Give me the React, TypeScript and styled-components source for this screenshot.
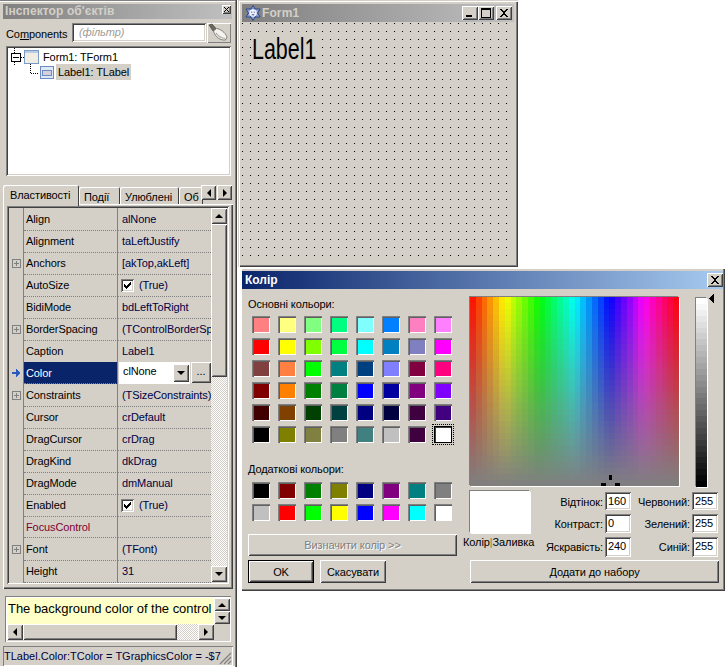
import styled, { createGlobalStyle, css } from "styled-components";

const GlobalStyle = createGlobalStyle`
    html, body {
        margin: 0;
        padding: 0;
        background: #fff;
        overflow: hidden;
    }

    body {
        font-family: "Liberation Sans", Arial, sans-serif;
        font-size: 11px;
        letter-spacing: -0.1px;
        color: #000;
    }
`;

const raised = css`
    background: #d4d0c8;
    box-shadow:
        inset 1px 1px 0 #fff,
        inset -1px -1px 0 #404040,
        inset 2px 2px 0 #d4d0c8,
        inset -2px -2px 0 #808080;
`;

const sunken = css`
    box-shadow:
        inset 1px 1px 0 #808080,
        inset -1px -1px 0 #fff,
        inset 2px 2px 0 #404040,
        inset -2px -2px 0 #d4d0c8;
`;

const hatch = css`
    background-color: #fff;
    background-image: conic-gradient(#d4d0c8 25%, transparent 0 50%, #d4d0c8 0 75%, transparent 0);
    background-size: 2px 2px;
`;

const Page = styled.div`
    position: relative;
    width: 728px;
    height: 668px;
    overflow: hidden;
`;

/* ---------- inspector ---------- */

const Inspector = styled.section`
    position: absolute;
    left: 0;
    top: 0;
    width: 237px;
    height: 667px;
    background: #d4d0c8;
    box-shadow: inset -1px 0 0 #404040, inset -2px 0 0 #808080, inset 0 1px 0 #808080, inset 0 2px 0 #fff,
        inset 0 -1px 0 #fff;
`;

const InspectorTitle = styled.h1`
    position: absolute;
    left: 3px;
    top: 4px;
    width: 229px;
    height: 15px;
    margin: 0;
    padding-left: 2px;
    box-sizing: border-box;
    background: linear-gradient(90deg, #808080, #c0c0c0);
    color: #d4d0c8;
    font-size: 12px;
    font-weight: bold;
    letter-spacing: 0.1px;
    line-height: 15px;
`;

const SmallClose = styled.button`
    ${raised}
    position: absolute;
    left: 222px;
    top: 5px;
    width: 9px;
    height: 9px;
    padding: 0;
    border: 0;
    font-size: 0;
`;

const ComponentsLabel = styled.label`
    position: absolute;
    left: 6px;
    top: 27px;
    line-height: 14px;
    u {
        text-decoration: underline;
    }
`;

const FilterEdit = styled.div`
    ${sunken}
    position: absolute;
    left: 72px;
    top: 23px;
    width: 134px;
    height: 19px;
    box-sizing: border-box;
    padding-left: 7px;
    background: #fff;
    color: #a09c94;
    font-style: italic;
    line-height: 19px;
`;

const BrushButton = styled.button`
    position: absolute;
    left: 207px;
    top: 23px;
    width: 24px;
    height: 20px;
    padding: 0;
    border: 0;
    background: #d4d0c8;
    box-shadow: inset 1px 1px 0 #fff, inset -1px -1px 0 #808080;
    svg {
        display: block;
    }
`;

const Tree = styled.div`
    ${sunken}
    position: absolute;
    left: 6px;
    top: 46px;
    width: 225px;
    height: 130px;
    background: #fff;
`;

const TreeSvg = styled.svg`
    position: absolute;
    left: 0;
    top: 0;
`;

const TreeText = styled.span<{ $left: number; $top: number; $selected?: boolean }>`
    position: absolute;
    left: ${(p) => p.$left}px;
    top: ${(p) => p.$top}px;
    height: 16px;
    padding: 0 2px;
    line-height: 16px;
    white-space: nowrap;
    background: ${(p) => (p.$selected ? "#d4d0c8" : "transparent")};
`;

const TabStrip = styled.div`
    position: absolute;
    left: 3px;
    top: 185px;
    width: 230px;
    height: 20px;
`;

const Tab = styled.div<{ $left: number; $width: number; $active?: boolean }>`
    position: absolute;
    left: ${(p) => p.$left}px;
    top: ${(p) => (p.$active ? 0 : 2)}px;
    width: ${(p) => p.$width}px;
    height: ${(p) => (p.$active ? 21 : 18)}px;
    overflow: hidden;
    box-sizing: border-box;
    padding: ${(p) => (p.$active ? "3px 0 0 7px" : "3px 0 0 5px")};
    border-radius: 2px 2px 0 0;
    background: #d4d0c8;
    z-index: ${(p) => (p.$active ? 2 : 0)};
    box-shadow: inset 1px 1px 0 #fff, inset -1px 0 0 #404040;
    white-space: nowrap;
    line-height: 14px;
`;

const TabScroll = styled.button<{ $left: number }>`
    ${raised}
    position: absolute;
    left: ${(p) => p.$left}px;
    top: 0;
    width: 15px;
    height: 15px;
    padding: 0;
    border: 0;
    display: flex;
    align-items: center;
    justify-content: center;
    z-index: 3;
`;

const Arrow = styled.i<{ $dir: "up" | "down" | "left" | "right" }>`
    display: block;
    width: 0;
    height: 0;
    border-style: solid;
    border-color: transparent;
    ${(p) =>
        p.$dir === "up" &&
        css`
            border-width: 0 4px 4px;
            border-bottom-color: #000;
        `}
    ${(p) =>
        p.$dir === "down" &&
        css`
            border-width: 4px 4px 0;
            border-top-color: #000;
        `}
    ${(p) =>
        p.$dir === "left" &&
        css`
            border-width: 4px 4px 4px 0;
            border-right-color: #000;
        `}
    ${(p) =>
        p.$dir === "right" &&
        css`
            border-width: 4px 0 4px 4px;
            border-left-color: #000;
        `}
`;

const TabPage = styled.div`
    position: absolute;
    left: 3px;
    top: 204px;
    width: 230px;
    height: 385px;
    box-shadow: inset 1px 1px 0 #fff, inset -1px -1px 0 #404040, inset -2px -2px 0 #808080;
`;

const Grid = styled.div`
    ${sunken}
    position: absolute;
    left: 4px;
    top: 2px;
    width: 222px;
    height: 378px;
`;

const Rows = styled.div`
    position: absolute;
    left: 2px;
    top: 2px;
    width: 202px;
`;

const Row = styled.div`
    display: grid;
    grid-template-columns: 15px 94px 93px;
    height: 22px;
`;

const Gutter = styled.div`
    position: relative;
    border-right: 1px solid #808080;
    display: flex;
    align-items: center;
    justify-content: center;
`;

const PlusBox = styled.span`
    display: block;
    box-sizing: border-box;
    width: 9px;
    height: 9px;
    margin-left: 1px;
    border: 1px solid #808080;
    background:
        linear-gradient(#808080, #808080) center / 5px 1px no-repeat,
        linear-gradient(#808080, #808080) center / 1px 5px no-repeat;
`;

const RowArrow = styled.svg`
    display: block;
    margin-left: 1px;
`;

const NameCell = styled.div<{ $active?: boolean; $link?: boolean }>`
    box-sizing: border-box;
    padding-left: 2px;
    border-right: 1px solid #808080;
    border-bottom: 1px dotted #808080;
    line-height: 22px;
    white-space: nowrap;
    overflow: hidden;
    color: ${(p) => (p.$active ? "#fff" : p.$link ? "#800030" : "#000")};
    background: ${(p) => (p.$active ? "#0a246a" : "transparent")};
`;

const ValueCell = styled.div`
    position: relative;
    box-sizing: border-box;
    padding-left: 4px;
    border-bottom: 1px dotted #808080;
    line-height: 22px;
    white-space: nowrap;
    color: #000040;
    display: flex;
    align-items: center;
`;

const ActiveValue = styled.div`
    position: relative;
    height: 22px;
    background: #d4d0c8;
`;

const ColorCombo = styled.div`
    position: absolute;
    left: 1px;
    top: 0;
    width: 71px;
    height: 22px;
    box-sizing: border-box;
    padding-left: 4px;
    background: #fff;
    line-height: 19px;
`;

const ComboDrop = styled.button`
    ${raised}
    position: absolute;
    right: 1px;
    top: 2px;
    width: 16px;
    height: 18px;
    padding: 0;
    border: 0;
    display: flex;
    align-items: center;
    justify-content: center;
`;

const EllipsisButton = styled.button`
    ${raised}
    position: absolute;
    left: 73px;
    top: 0;
    width: 20px;
    height: 21px;
    padding: 0 0 4px;
    border: 0;
    font: inherit;
    line-height: 14px;
    letter-spacing: 0;
`;

const Check = styled.span`
    ${sunken}
    display: block;
    flex: none;
    width: 13px;
    height: 13px;
    margin: 0 5px 0 -1px;
    background: #fff;
    svg {
        display: block;
    }
`;

const ScrollButton = styled.button<{ $top?: number; $left?: number; $w?: number; $h?: number }>`
    ${raised}
    position: absolute;
    left: ${(p) => p.$left ?? 0}px;
    top: ${(p) => p.$top ?? 0}px;
    width: ${(p) => p.$w ?? 16}px;
    height: ${(p) => p.$h ?? 16}px;
    padding: 0;
    border: 0;
    display: flex;
    align-items: center;
    justify-content: center;
`;

const VScroll = styled.div`
    ${hatch}
    position: absolute;
    left: 204px;
    top: 2px;
    width: 16px;
    height: 374px;
`;

const HintPanel = styled.div`
    position: absolute;
    left: 5px;
    top: 596px;
    width: 226px;
    height: 46px;
    box-shadow: inset 1px 1px 0 #808080, inset -1px -1px 0 #fff, inset 2px 2px 0 #fff;
`;

const HintText = styled.div`
    position: absolute;
    left: 2px;
    top: 2px;
    width: 207px;
    height: 26px;
    box-sizing: border-box;
    padding-left: 1px;
    background: #ffffc8;
    font-size: 13px;
    letter-spacing: -0.03px;
    line-height: 22px;
    white-space: nowrap;
    color: #000;
`;

const HScroll = styled.div`
    ${hatch}
    position: absolute;
    left: 2px;
    top: 28px;
    width: 207px;
    height: 16px;
`;

const StatusBar = styled.div`
    position: absolute;
    left: 3px;
    top: 646px;
    width: 230px;
    height: 20px;
    padding-left: 1px;
    box-sizing: border-box;
    box-shadow: inset 1px 1px 0 #808080, inset -1px -1px 0 #fff;
    line-height: 20px;
    white-space: nowrap;
    font-size: 11px;
    letter-spacing: 0;
    color: #000040;
`;

const Grip = styled.svg`
    position: absolute;
    right: 1px;
    bottom: 1px;
`;

/* ---------- form ---------- */

const FormWindow = styled.section`
    position: absolute;
    left: 238px;
    top: 0;
    width: 280px;
    height: 267px;
    background: #d4d0c8;
    box-shadow: inset 1px 1px 0 #d4d0c8, inset 2px 2px 0 #fff, inset -1px -1px 0 #404040, inset -2px -2px 0 #808080;
`;

const FormTitle = styled.h2`
    position: absolute;
    left: 4px;
    top: 4px;
    width: 272px;
    height: 18px;
    margin: 0;
    background: linear-gradient(90deg, #808080, #c0c0c0);
    color: #d4d0c8;
    font-size: 12px;
    font-weight: bold;
    letter-spacing: 0.1px;
    line-height: 18px;
    padding-left: 20px;
    box-sizing: border-box;
`;

const FormIcon = styled.svg`
    position: absolute;
    left: 3px;
    top: 1px;
`;

const CaptionButton = styled.button<{ $left: number }>`
    ${raised}
    position: absolute;
    left: ${(p) => p.$left}px;
    top: 2px;
    width: 16px;
    height: 14px;
    padding: 0;
    border: 0;
    svg {
        display: block;
    }
`;

const FormClient = styled.div`
    position: absolute;
    left: 4px;
    top: 22px;
    width: 272px;
    height: 241px;
    background-image: conic-gradient(at 1px 1px, transparent 270deg, #000 0);
    background-size: 8px 8px;
    background-position: 0 1px;
`;

const BigLabel = styled.div`
    position: absolute;
    left: 10px;
    top: 11px;
    font-size: 29px;
    letter-spacing: 0;
    line-height: 32px;
    color: #000;
    background: #d4d0c8;
    transform-origin: left top;
    transform: scaleX(0.74);
`;

/* ---------- colour dialog ---------- */

const ColorDialog = styled.section`
    position: absolute;
    left: 241px;
    top: 268px;
    width: 484px;
    height: 323px;
    background: #d4d0c8;
    box-shadow: inset 1px 1px 0 #fff, inset -1px -1px 0 #404040, inset -2px -2px 0 #808080;
`;

const DialogTitle = styled.h2`
    position: absolute;
    left: 1px;
    top: 3px;
    width: 481px;
    height: 18px;
    margin: 0;
    padding-left: 3px;
    box-sizing: border-box;
    background: linear-gradient(90deg, #0a246a, #a6caf0);
    color: #fff;
    font-size: 12px;
    font-weight: bold;
    letter-spacing: 0;
    line-height: 18px;
`;

const DialogClose = styled.button`
    ${raised}
    position: absolute;
    left: 466px;
    top: 5px;
    width: 16px;
    height: 14px;
    padding: 0;
    border: 0;
    svg {
        display: block;
    }
`;

const Caption = styled.div<{ $top: number }>`
    position: absolute;
    left: 7px;
    top: ${(p) => p.$top}px;
    line-height: 14px;
    white-space: nowrap;
`;

const SwatchGrid = styled.div<{ $top: number }>`
    position: absolute;
    left: 11px;
    top: ${(p) => p.$top}px;
    display: grid;
    grid-template-columns: repeat(8, 18px);
    grid-auto-rows: 17px;
    column-gap: 8px;
    row-gap: 5px;
`;

const Swatch = styled.div<{ $color: string; $selected?: boolean }>`
    position: relative;
    background: ${(p) => p.$color};
    box-shadow:
        inset 1px 1px 0 #808080,
        inset 2px 2px 0 #606060,
        inset -1px -1px 0 #fff;
    ${(p) =>
        p.$selected &&
        css`
            box-shadow: inset 1px 1px 0 #000, inset -1px -1px 0 #000, inset 2px 2px 0 #404040;
            outline: 1px dotted #000;
            outline-offset: 1px;
        `}
`;

const Button = styled.button<{ $left: number; $top: number; $width: number; $height: number; $default?: boolean }>`
    ${raised}
    position: absolute;
    left: ${(p) => p.$left}px;
    top: ${(p) => p.$top}px;
    width: ${(p) => p.$width}px;
    height: ${(p) => p.$height}px;
    padding: 0;
    border: ${(p) => (p.$default ? "1px solid #000" : "0")};
    box-sizing: border-box;
    font: inherit;
    letter-spacing: inherit;
    color: #000;
    &:disabled {
        color: #808080;
        text-shadow: 1px 1px 0 #fff;
    }
`;

const SpectrumFrame = styled.svg`
    position: absolute;
    left: 229px;
    top: 29px;
    display: block;
    box-shadow: -1px -1px 0 #808080, 1px 1px 0 #fff;
`;

const Crosshair = styled.svg`
    position: absolute;
    left: 360px;
    top: 207px;
`;

const LumBar = styled.svg`
    position: absolute;
    left: 455px;
    top: 30px;
    display: block;
    box-shadow: -1px -1px 0 #808080, 1px 1px 0 #fff;
`;

const LumPointer = styled.svg`
    position: absolute;
    left: 467px;
    top: 26px;
`;

const Preview = styled.div`
    position: absolute;
    left: 229px;
    top: 223px;
    width: 60px;
    height: 42px;
    background: #fff;
    box-shadow: -1px -1px 0 #808080, 1px 1px 0 #fff;
`;

const PreviewLabel = styled.div`
    position: absolute;
    left: 222px;
    top: 267px;
    line-height: 14px;
    white-space: nowrap;
    b {
        font-weight: normal;
        color: #b07020;
    }
`;

const Fields = styled.div`
    position: absolute;
    left: 290px;
    top: 224px;
    display: grid;
    grid-template-columns: 74px 26px 61px 26px;
    grid-template-rows: 18px 19px 20px;
    row-gap: 4px;
`;

const FieldLabel = styled.label`
    padding-right: 2px;
    text-align: right;
    line-height: 20px;
    white-space: nowrap;
`;

const FieldEdit = styled.div`
    ${sunken}
    box-sizing: border-box;
    padding-left: 3px;
    background: #fff;
    line-height: 19px;
`;

const hues = Array.from({ length: 36 }, (_, i) => i);
const sats = Array.from({ length: 32 }, (_, i) => i);
const lums = Array.from({ length: 32 }, (_, i) => i);

const basicColors = [
    "#ff8080", "#ffff80", "#80ff80", "#00ff80", "#80ffff", "#0080ff", "#ff80c0", "#ff80ff",
    "#ff0000", "#ffff00", "#80ff00", "#00ff40", "#00ffff", "#0080c0", "#8080c0", "#ff00ff",
    "#804040", "#ff8040", "#00ff00", "#008080", "#004080", "#8080ff", "#800040", "#ff0080",
    "#800000", "#ff8000", "#008000", "#008040", "#0000ff", "#0000a0", "#800080", "#8000ff",
    "#400000", "#804000", "#004000", "#004040", "#000080", "#000040", "#400040", "#400080",
    "#000000", "#808000", "#808040", "#808080", "#408080", "#c0c0c0", "#400040", "#ffffff",
];

const customColors = [
    "#000000", "#800000", "#008000", "#808000", "#000080", "#800080", "#008080", "#808080",
    "#c0c0c0", "#ff0000", "#00ff00", "#ffff00", "#0000ff", "#ff00ff", "#00ffff", "#ffffff",
];

type Prop = {
    name: string;
    value?: string;
    plus?: boolean;
    check?: boolean;
    active?: boolean;
    link?: boolean;
};

const props: Prop[] = [
    { name: "Align", value: "alNone" },
    { name: "Alignment", value: "taLeftJustify" },
    { name: "Anchors", value: "[akTop,akLeft]", plus: true },
    { name: "AutoSize", value: "(True)", check: true },
    { name: "BidiMode", value: "bdLeftToRight" },
    { name: "BorderSpacing", value: "(TControlBorderSp", plus: true },
    { name: "Caption", value: "Label1" },
    { name: "Color", active: true },
    { name: "Constraints", value: "(TSizeConstraints)", plus: true },
    { name: "Cursor", value: "crDefault" },
    { name: "DragCursor", value: "crDrag" },
    { name: "DragKind", value: "dkDrag" },
    { name: "DragMode", value: "dmManual" },
    { name: "Enabled", value: "(True)", check: true },
    { name: "FocusControl", link: true },
    { name: "Font", value: "(TFont)", plus: true },
    { name: "Height", value: "31" },
];

const CloseGlyph = () => (
    <svg width="16" height="14" viewBox="0 0 16 14" shapeRendering="crispEdges">
        <path d="M4 3h2v1h1v1h2v-1h1v-1h2v1h-1v1h-1v1h-1v2h1v1h1v1h1v1h-2v-1h-1v-1h-2v1h-1v1h-2v-1h1v-1h1v-1h1v-2h-1v-1h-1v-1h-1z" fill="#000" />
    </svg>
);

const TickMark = () => (
    <svg width="13" height="13" viewBox="0 0 13 13" shapeRendering="crispEdges">
        <path d="M3 5h1v1h1v1h1v-1h1v-1h1v-1h1v-1h1v3h-1v1h-1v1h-1v1h-1v1h-1v-1h-1v-1h-1z" fill="#000" />
    </svg>
);

export default function App() {
    return (
        <Page>
            <GlobalStyle />

            <Inspector>
                <InspectorTitle>Інспектор об'єктів</InspectorTitle>
                <SmallClose aria-label="Закрити">
                    <svg width="9" height="9" viewBox="0 0 9 9" shapeRendering="crispEdges">
                        <path d="M2 2h1v1h1v1h1v-1h1v-1h1v1h-1v1h-1v1h1v1h1v1h-1v-1h-1v-1h-1v1h-1v1h-1v-1h1v-1h1v-1h-1v-1h-1z" fill="#000" />
                    </svg>
                </SmallClose>
                <ComponentsLabel>
                    Co<u>m</u>ponents
                </ComponentsLabel>
                <FilterEdit>(фільтр)</FilterEdit>
                <BrushButton aria-label="Очистити">
                    <svg width="24" height="20" viewBox="0 0 24 20">
                        <path d="M2 2l3-1 4 4.5-3 2.5z" fill="#6c6860" stroke="#48453f" strokeWidth="0.7" />
                        <path d="M6.5 8l3-2.5c4 .5 9 4 10.5 8.5l-1.5 3c-5 .5-10.5-3-12-9z" fill="#f4f3ef" stroke="#77746c" strokeWidth="0.9" />
                        <path d="M9 10c2 3 5 5 9 5.5" fill="none" stroke="#a8a49c" strokeWidth="1.2" />
                    </svg>
                </BrushButton>

                <Tree>
                    <TreeSvg width="225" height="40" shapeRendering="crispEdges">
                        <path d="M8.5 2v5M8.5 16v3M15 11.5h3M24.5 18v9M25 27.5h8" stroke="#000" strokeDasharray="1 1" fill="none" />
                        <rect x="5.5" y="7.5" width="9" height="8" fill="#fff" stroke="#000" />
                        <path d="M7 11.5h6" stroke="#000" />
                        <rect x="18.5" y="4.5" width="14" height="13" fill="#f0eee2" stroke="#7a9ac8" />
                        <rect x="19" y="5" width="13" height="2" fill="#b8cce8" />
                        <rect x="34.5" y="20.5" width="13" height="12" fill="#dfe8f6" stroke="#6c8cc0" />
                        <rect x="36.5" y="24.5" width="9" height="5" fill="#d4d0dc" stroke="#6c8cc0" />
                    </TreeSvg>
                    <TreeText $left={35} $top={3}>Form1: TForm1</TreeText>
                    <TreeText $left={50} $top={18} $selected>Label1: TLabel</TreeText>
                </Tree>

                <TabStrip>
                    <Tab $left={0} $width={76} $active>Властивості</Tab>
                    <Tab $left={76} $width={41}>Події</Tab>
                    <Tab $left={117} $width={59}>Улюблені</Tab>
                    <Tab $left={176} $width={24}>Об</Tab>
                    <TabScroll $left={198}><Arrow $dir="left" /></TabScroll>
                    <TabScroll $left={214}><Arrow $dir="right" /></TabScroll>
                </TabStrip>

                <TabPage>
                    <Grid>
                        <Rows>
                            {props.map((p) => (
                                <Row key={p.name}>
                                    <Gutter>
                                        {p.plus && <PlusBox />}
                                        {p.active && (
                                            <RowArrow width="9" height="9" viewBox="0 0 9 9" shapeRendering="crispEdges">
                                                <path d="M0 3h4v-3h1v1h1v1h1v1h1v2h-1v1h-1v1h-1v1h-1v-3h-4z" fill="#2a5cc0" />
                                            </RowArrow>
                                        )}
                                    </Gutter>
                                    <NameCell $active={p.active} $link={p.link}>{p.name}</NameCell>
                                    {p.active ? (
                                        <ActiveValue>
                                            <ColorCombo>
                                                clNone
                                                <ComboDrop aria-label="Список"><Arrow $dir="down" /></ComboDrop>
                                            </ColorCombo>
                                            <EllipsisButton>...</EllipsisButton>
                                        </ActiveValue>
                                    ) : (
                                        <ValueCell>
                                            {p.check && (
                                                <Check><TickMark /></Check>
                                            )}
                                            {p.value}
                                        </ValueCell>
                                    )}
                                </Row>
                            ))}
                        </Rows>
                        <VScroll>
                            <ScrollButton $top={0}><Arrow $dir="up" /></ScrollButton>
                            <ScrollButton $top={16} $h={153} />
                            <ScrollButton $top={358}><Arrow $dir="down" /></ScrollButton>
                        </VScroll>
                    </Grid>
                </TabPage>

                <HintPanel>
                    <HintText>The background color of the control</HintText>
                    <ScrollButton $left={209} $top={2} $h={13}><Arrow $dir="up" /></ScrollButton>
                    <ScrollButton $left={209} $top={15} $h={13}><Arrow $dir="down" /></ScrollButton>
                    <HScroll>
                        <ScrollButton $left={0}><Arrow $dir="left" /></ScrollButton>
                        <ScrollButton $left={16} $w={154} />
                        <ScrollButton $left={191}><Arrow $dir="right" /></ScrollButton>
                    </HScroll>
                </HintPanel>

                <StatusBar>
                    TLabel.Color:TColor = TGraphicsColor = -$7
                    <Grip width="13" height="13" viewBox="0 0 13 13">
                        <path d="M12 1L1 12M12 5L5 12M12 9L9 12" stroke="#808080" strokeWidth="1.2" />
                    </Grip>
                </StatusBar>
            </Inspector>

            <FormWindow>
                <FormTitle>
                    Form1
                    <FormIcon width="16" height="16" viewBox="0 0 16 16">
                        <path d="M8 .5L15 12H1z" fill="#8ea4d8" stroke="#2c4688" strokeWidth="1" strokeLinejoin="round" />
                        <path d="M8 15.5L1 4h14z" fill="#8ea4d8" stroke="#2c4688" strokeWidth="1" strokeLinejoin="round" />
                        <path d="M8 2.5L13 10.5H3z" fill="#8ea4d8" />
                        <circle cx="8" cy="8" r="3.8" fill="#eef1fa" />
                        <path d="M6.2 7.2h1M8.8 7.2h1M6.8 9.8h2.4" stroke="#2c4688" strokeWidth="1" />
                    </FormIcon>
                    <CaptionButton $left={220} aria-label="Згорнути">
                        <svg width="16" height="14" viewBox="0 0 16 14" shapeRendering="crispEdges">
                            <rect x="4" y="9" width="6" height="2" fill="#000" />
                        </svg>
                    </CaptionButton>
                    <CaptionButton $left={236} aria-label="Розгорнути">
                        <svg width="16" height="14" viewBox="0 0 16 14" shapeRendering="crispEdges">
                            <path d="M3 2h10v10h-10z M4 4v7h8v-7z" fill="#000" fillRule="evenodd" />
                        </svg>
                    </CaptionButton>
                    <CaptionButton $left={254} aria-label="Закрити">
                        <CloseGlyph />
                    </CaptionButton>
                </FormTitle>
                <FormClient>
                    <BigLabel>Label1</BigLabel>
                </FormClient>
            </FormWindow>

            <ColorDialog>
                <DialogTitle>Колір</DialogTitle>
                <DialogClose aria-label="Закрити">
                    <CloseGlyph />
                </DialogClose>

                <Caption $top={29}>Основні кольори:</Caption>
                <SwatchGrid $top={48}>
                    {basicColors.map((c, i) => (
                        <Swatch key={i} $color={c} $selected={i === 47} />
                    ))}
                </SwatchGrid>

                <Caption $top={194}>Додаткові кольори:</Caption>
                <SwatchGrid $top={214}>
                    {customColors.map((c, i) => (
                        <Swatch key={i} $color={c} />
                    ))}
                </SwatchGrid>

                <Button $left={7} $top={266} $width={209} $height={22} disabled>Визначити колір &gt;&gt;</Button>
                <Button $left={7} $top={292} $width={66} $height={23} $default>OK</Button>
                <Button $left={79} $top={292} $width={66} $height={23}>Скасувати</Button>

                <SpectrumFrame width="209" height="189" viewBox="0 0 36 32" preserveAspectRatio="none" shapeRendering="crispEdges">
                    {sats.map((s) =>
                        hues.map((h) => (
                            <rect
                                key={`${h}-${s}`}
                                x={h}
                                y={s}
                                width="1.02"
                                height="1.02"
                                fill={`hsl(${(h + 0.5) * 10}, ${100 - ((s + 0.5) / 32) * 100}%, 50%)`}
                            />
                        ))
                    )}
                </SpectrumFrame>
                <Crosshair width="20" height="11" viewBox="0 0 20 11" shapeRendering="crispEdges">
                    <path d="M8 0h3v5h-3zM0 8h5v3h-5zM14 8h5v3h-5z" fill="#000" />
                </Crosshair>
                <LumBar width="11" height="189" viewBox="0 0 1 32" preserveAspectRatio="none" shapeRendering="crispEdges">
                    {lums.map((l) => (
                        <rect key={l} x="0" y={l} width="1" height="1.02" fill={`hsl(0, 0%, ${100 - (l / 31) * 100}%)`} />
                    ))}
                </LumBar>
                <LumPointer width="6" height="9" viewBox="0 0 6 9" shapeRendering="crispEdges">
                    <path d="M5 0h1v9h-1v-1h-1v-1h-1v-1h-1v-1h-1v-1h1v-1h1v-1h1v-1h1z" fill="#000" />
                </LumPointer>

                <Preview />
                <PreviewLabel>Колір<b>|</b>Заливка</PreviewLabel>

                <Fields>
                    <FieldLabel>Відтінок:</FieldLabel>
                    <FieldEdit>160</FieldEdit>
                    <FieldLabel>Червоний:</FieldLabel>
                    <FieldEdit>255</FieldEdit>
                    <FieldLabel>Контраст:</FieldLabel>
                    <FieldEdit>0</FieldEdit>
                    <FieldLabel>Зелений:</FieldLabel>
                    <FieldEdit>255</FieldEdit>
                    <FieldLabel>Яскравість:</FieldLabel>
                    <FieldEdit>240</FieldEdit>
                    <FieldLabel>Синій:</FieldLabel>
                    <FieldEdit>255</FieldEdit>
                </Fields>

                <Button $left={229} $top={292} $width={249} $height={23}>Додати до набору</Button>
            </ColorDialog>
        </Page>
    );
}
